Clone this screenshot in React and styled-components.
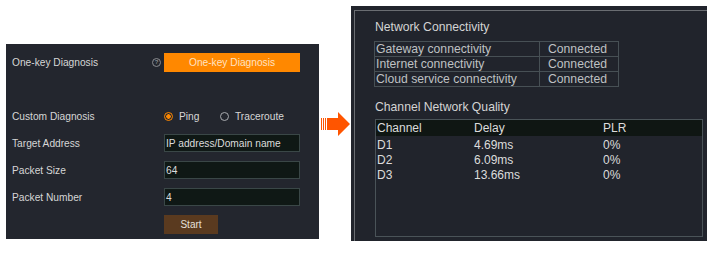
import React from 'react'
import styled, { createGlobalStyle } from 'styled-components'

const GlobalStyle = createGlobalStyle`
  body {
    margin: 0;
    background: #ffffff;
    font-family: 'Liberation Sans', Arial, sans-serif;
  }
`

const connectivity = [
  ['Gateway connectivity', 'Connected'],
  ['Internet connectivity', 'Connected'],
  ['Cloud service connectivity', 'Connected'],
]

const channels = [
  ['D1', '4.69ms', '0%'],
  ['D2', '6.09ms', '0%'],
  ['D3', '13.66ms', '0%'],
]

export default function App() {
  return (
    <Page>
      <GlobalStyle />
      <LeftPanel>
        <Row>
          <Label>One-key Diagnosis</Label>
          <HelpSlot><HelpIcon>?</HelpIcon></HelpSlot>
          <OrangeButton>One-key Diagnosis</OrangeButton>
        </Row>
        <Row $top={35}>
          <Label>Custom Diagnosis</Label>
          <HelpSlot />
          <Radios>
            <RadioItem><Radio $on /><span>Ping</span></RadioItem>
            <RadioItem><Radio /><span>Traceroute</span></RadioItem>
          </Radios>
        </Row>
        <Row>
          <Label>Target Address</Label>
          <HelpSlot />
          <Field>IP address/Domain name</Field>
        </Row>
        <Row>
          <Label>Packet Size</Label>
          <HelpSlot />
          <Field>64</Field>
        </Row>
        <Row>
          <Label>Packet Number</Label>
          <HelpSlot />
          <Field>4</Field>
        </Row>
        <Row>
          <Label />
          <HelpSlot />
          <StartButton>Start</StartButton>
        </Row>
      </LeftPanel>

      <ArrowBox>
        <svg width="32" height="26" viewBox="0 0 32 26">
          <rect x="2" y="6" width="1" height="12" fill="#ff5500" />
          <rect x="4" y="6" width="1" height="12" fill="#ff5500" />
          <rect x="6" y="6" width="1" height="12" fill="#ff5500" />
          <polygon points="8,6 19,6 19,0 31,12 19,24 19,18 8,18" fill="#ff5500" />
        </svg>
      </ArrowBox>

      <RightPanel>
        <Frame>
          <Title>Network Connectivity</Title>
          <ConnTable>
            <tbody>
              {connectivity.map(([k, v]) => (
                <tr key={k}>
                  <ConnKey>{k}</ConnKey>
                  <ConnVal>{v}</ConnVal>
                </tr>
              ))}
            </tbody>
          </ConnTable>
          <Title $top={12} $bottom={4}>Channel Network Quality</Title>
          <QualityBox>
            <QualityHead>
              <Cell>Channel</Cell>
              <Cell>Delay</Cell>
              <Cell>PLR</Cell>
            </QualityHead>
            {channels.map(c => (
              <QualityRow key={c[0]}>
                {c.map((v, i) => <Cell key={i}>{v}</Cell>)}
              </QualityRow>
            ))}
          </QualityBox>
        </Frame>
      </RightPanel>
    </Page>
  )
}

const Page = styled.div`
  display: flex;
  align-items: flex-start;
  padding: 6px 0 0 6px;
  width: 726px;
  height: 253px;
  box-sizing: border-box;
`

const LeftPanel = styled.div`
  margin-top: 38px;
  width: 313px;
  height: 195px;
  box-sizing: border-box;
  background: #23262e;
  padding: 9px 0 0 6px;
  display: flex;
  flex-direction: column;
  gap: 9px;
  color: #d6d6d6;
  font-size: 10px;
`

const Row = styled.div`
  display: flex;
  align-items: center;
  margin-top: ${p => (p.$top ? p.$top - 9 : 0)}px;
`

const Label = styled.div`
  width: 140px;
  font-size: 10.2px;
`

const HelpSlot = styled.div`
  width: 12px;
  display: flex;
  align-items: center;
`

const HelpIcon = styled.span`
  width: 7px;
  height: 7px;
  border: 1px solid #8a8c90;
  border-radius: 50%;
  color: #8a8c90;
  font-size: 6px;
  line-height: 7px;
  text-align: center;
  font-weight: bold;
`

const OrangeButton = styled.div`
  width: 136px;
  height: 19px;
  background: #ff8800;
  color: #ffe2c2;
  font-size: 10.2px;
  display: flex;
  align-items: center;
  justify-content: center;
`

const Radios = styled.div`
  display: flex;
  align-items: center;
  height: 18px;
`

const RadioItem = styled.div`
  display: flex;
  align-items: center;
  gap: 6px;
  width: 56px;
  font-size: 10.2px;
  white-space: nowrap;
`

const Radio = styled.span`
  flex-shrink: 0;
  box-sizing: border-box;
  width: 9px;
  height: 9px;
  border-radius: 50%;
  border: 1px solid ${p => (p.$on ? '#ff8800' : '#a8aaae')};
  background: ${p => (p.$on ? 'radial-gradient(circle, #ff8800 0 2px, transparent 2.5px)' : 'transparent')};
`

const Field = styled.div`
  width: 136px;
  height: 18px;
  box-sizing: border-box;
  background: #0f1815;
  border: 1px solid #3a4747;
  padding-left: 1px;
  display: flex;
  align-items: center;
  color: #dcdcdc;
  font-size: 10.2px;
`

const StartButton = styled.div`
  width: 54px;
  height: 19px;
  background: #5a3a1f;
  color: #e6e0da;
  font-size: 10px;
  display: flex;
  align-items: center;
  justify-content: center;
`

const ArrowBox = styled.div`
  width: 32px;
  margin-top: 106px;
  display: flex;
  justify-content: flex-end;
`

const RightPanel = styled.div`
  width: 356px;
  height: 235px;
  box-sizing: border-box;
  background: #21242c;
  padding: 4px 0 0 3px;
  display: flex;
`

const Frame = styled.div`
  flex: 1;
  border-top: 1px solid #6a6d72;
  border-left: 1px solid #6a6d72;
  padding: 8px 0 0 20px;
  color: #cfcfcf;
  font-size: 12px;
`

const Title = styled.div`
  font-size: 12.2px;
  line-height: 16px;
  margin-top: ${p => p.$top || 0}px;
  margin-bottom: ${p => (p.$bottom === undefined ? 6 : p.$bottom)}px;
  color: #d4d4d4;
`

const ConnTable = styled.table`
  border-collapse: collapse;
  margin-left: -1px;
  td {
    border: 1px solid #475055;
    height: 14.6px;
    padding: 0 0 0 1px;
    line-height: 14px;
    font-size: 12.2px;
    color: #bfc1c3;
    box-sizing: border-box;
  }
`

const ConnKey = styled.td`
  width: 165px;
`

const ConnVal = styled.td`
  width: 79px;
  && { padding-left: 8px; }
`

const QualityBox = styled.div`
  width: 328px;
  height: 118px;
  box-sizing: border-box;
  border: 1px solid #4a5358;
`

const QualityRow = styled.div`
  display: grid;
  grid-template-columns: 97px 129px 1fr;
  height: 15px;
  padding-left: 1px;
  align-items: center;
  color: #dcdcdc;
  font-size: 12px;
`

const QualityHead = styled(QualityRow)`
  background: #0f1613;
  height: 16px;
  margin-bottom: 1px;
`

const Cell = styled.div`
  white-space: nowrap;
`
